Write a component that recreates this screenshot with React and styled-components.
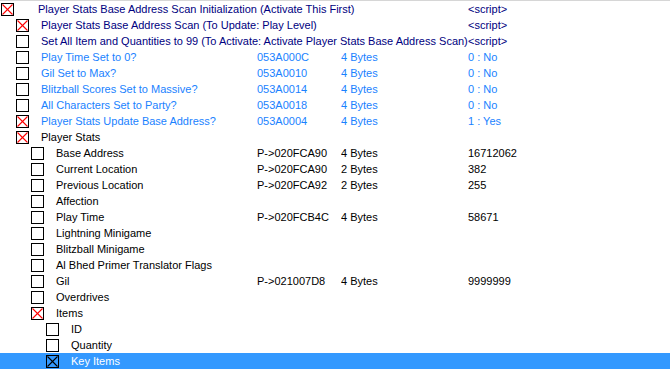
import React from "react";
import styled, { createGlobalStyle } from "styled-components";

const Global = createGlobalStyle`
  html, body { margin: 0; padding: 0; background: #fff; overflow: hidden; }
  body { font-family: "Liberation Sans", Arial, sans-serif; font-size: 11px; }
`;

const Table = styled.div`
  width: 670px;
  height: 369px;
  border-top: 1px solid #d6d6d6;
  box-sizing: border-box;
  background: #fff;
  overflow: hidden;
`;

const COLORS = { navy: "#000080", blue: "#1a82ff", black: "#000" };

const Row = styled.div`
  display: grid;
  grid-template-columns: 257px 84px 127px 1fr;
  height: 16px;
  line-height: 16px;
  white-space: nowrap;
  color: ${(p) => (p.$selected ? "#fff" : COLORS[p.$tone])};
  background: ${(p) => (p.$selected ? "#3399ff" : "transparent")};
`;

const Desc = styled.div`
  display: flex;
  align-items: flex-start;
  padding-left: ${(p) => 1 + p.$level * 15}px;
  overflow: visible;
`;

const Label = styled.span`
  margin-left: ${(p) => (p.$level === 0 ? 24 : 12)}px;
`;

const Cell = styled.div`
  overflow: hidden;
`;

const BoxWrap = styled.span`
  display: inline-block;
  width: 13px;
  height: 13px;
  margin-top: 2px;
  flex: none;
`;

function Check({ checked, selected }) {
  const xColor = selected ? "#000" : "#ff0000";
  return (
    <BoxWrap>
      <svg width="13" height="13" viewBox="0 0 13 13" style={{ display: "block" }} shapeRendering="crispEdges">
        <rect x="0.5" y="0.5" width="12" height="12" fill="none" stroke="#000" strokeWidth="1" />
        {checked && (
          <g stroke={xColor} strokeWidth="1.1" shapeRendering="auto">
            <line x1="1.5" y1="1.5" x2="11.5" y2="11.5" />
            <line x1="11.5" y1="1.5" x2="1.5" y2="11.5" />
          </g>
        )}
      </svg>
    </BoxWrap>
  );
}

const rows = [
  { l: 0, c: 1, t: "navy", d: "Player Stats Base Address Scan Initialization (Activate This First)", v: "<script>" },
  { l: 1, c: 1, t: "navy", d: "Player Stats Base Address Scan (To Update: Play Level)", v: "<script>" },
  { l: 1, c: 0, t: "navy", d: "Set All Item and Quantities to 99 (To Activate: Activate Player Stats Base Address Scan)", v: "<script>" },
  { l: 1, c: 0, t: "blue", d: "Play Time Set to 0?", a: "053A000C", ty: "4 Bytes", v: "0 : No" },
  { l: 1, c: 0, t: "blue", d: "Gil Set to Max?", a: "053A0010", ty: "4 Bytes", v: "0 : No" },
  { l: 1, c: 0, t: "blue", d: "Blitzball Scores Set to Massive?", a: "053A0014", ty: "4 Bytes", v: "0 : No" },
  { l: 1, c: 0, t: "blue", d: "All Characters Set to Party?", a: "053A0018", ty: "4 Bytes", v: "0 : No" },
  { l: 1, c: 1, t: "blue", d: "Player Stats Update Base Address?", a: "053A0004", ty: "4 Bytes", v: "1 : Yes" },
  { l: 1, c: 1, t: "black", d: "Player Stats" },
  { l: 2, c: 0, t: "black", d: "Base Address", a: "P->020FCA90", ty: "4 Bytes", v: "16712062" },
  { l: 2, c: 0, t: "black", d: "Current Location", a: "P->020FCA90", ty: "2 Bytes", v: "382" },
  { l: 2, c: 0, t: "black", d: "Previous Location", a: "P->020FCA92", ty: "2 Bytes", v: "255" },
  { l: 2, c: 0, t: "black", d: "Affection" },
  { l: 2, c: 0, t: "black", d: "Play Time", a: "P->020FCB4C", ty: "4 Bytes", v: "58671" },
  { l: 2, c: 0, t: "black", d: "Lightning Minigame" },
  { l: 2, c: 0, t: "black", d: "Blitzball Minigame" },
  { l: 2, c: 0, t: "black", d: "Al Bhed Primer Translator Flags" },
  { l: 2, c: 0, t: "black", d: "Gil", a: "P->021007D8", ty: "4 Bytes", v: "9999999" },
  { l: 2, c: 0, t: "black", d: "Overdrives" },
  { l: 2, c: 1, t: "black", d: "Items" },
  { l: 3, c: 0, t: "black", d: "ID" },
  { l: 3, c: 0, t: "black", d: "Quantity" },
  { l: 3, c: 1, t: "black", d: "Key Items", sel: true },
];

export default function App() {
  return (
    <>
      <Global />
      <Table>
        {rows.map((r, i) => (
          <Row key={i} $tone={r.t} $selected={r.sel}>
            <Desc $level={r.l}>
              <Check checked={!!r.c} selected={!!r.sel} />
              <Label $level={r.l}>{r.d}</Label>
            </Desc>
            <Cell>{r.a || ""}</Cell>
            <Cell>{r.ty || ""}</Cell>
            <Cell>{r.v || ""}</Cell>
          </Row>
        ))}
      </Table>
    </>
  );
}
